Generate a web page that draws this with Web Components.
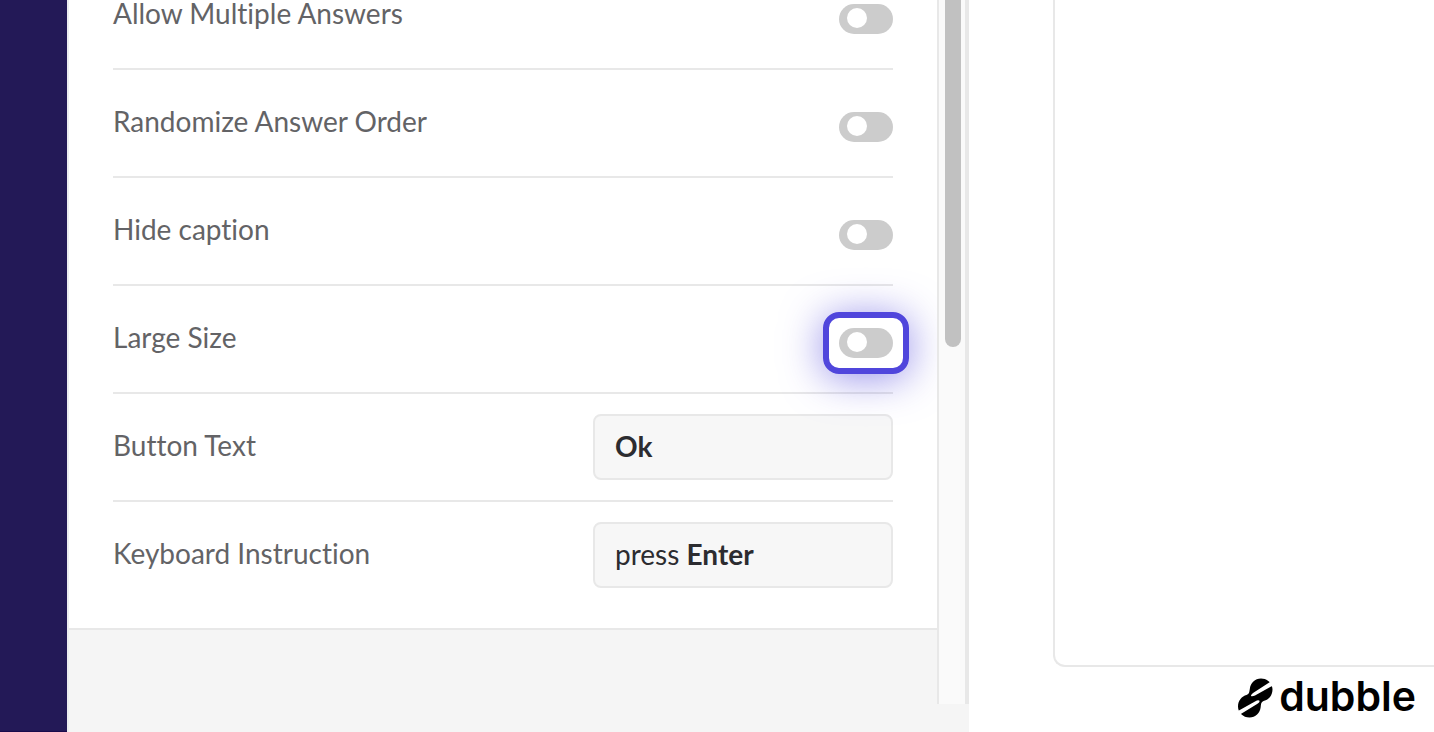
<!DOCTYPE html>
<html lang="en">
<head>
<meta charset="utf-8">
<meta name="viewport" content="width=device-width, initial-scale=1">
<title>Question settings</title>
<style>
  :root {
    --line: #e8e8e8;
    --surface: #f5f5f5;
    --field: #f7f7f7;
    --label: #636366;
    --ink: #2c2c30;
    --accent: #5046dc;
  }

  body {
    margin: 0;
    background: #fff;
    color: var(--label);
    font-family: Lato, "Liberation Sans", sans-serif;
    font-size: 28px;
    font-variant-ligatures: none;
    line-height: 28px;
  }
</style>
</head>
<body>
<builder-app>
  <settings-panel slot="panel">
    <toggle-row label="Allow Multiple Answers"></toggle-row>
    <toggle-row label="Randomize Answer Order"></toggle-row>
    <toggle-row label="Hide caption"></toggle-row>
    <toggle-row label="Large Size" highlighted></toggle-row>
    <text-row label="Button Text" value="Ok"></text-row>
    <rich-text-row label="Keyboard Instruction">press <b>Enter</b></rich-text-row>
  </settings-panel>
  <preview-pane slot="preview">
    <brand-logo>dubble</brand-logo>
  </preview-pane>
</builder-app>

<script>
// Shared helper: attach an open root and fill it with markup
const renderShadow = (host, markup) => {
  host.attachShadow({ mode: 'open' }).innerHTML = markup;
};

class BuilderApp extends HTMLElement {
  constructor() {
    super();
    renderShadow(this, `
      <style>
        :host {
          display: grid;
          grid-template-columns: 67px minmax(0, 902fr) minmax(0, 465fr);
          height: 100vh;
          overflow: hidden;
        }
        nav {
          background: #231957;
          border-bottom: 1px solid #190b4c;
        }
      </style>
      <nav aria-label="Main"></nav>
      <slot name="panel"></slot>
      <slot name="preview"></slot>
    `);
  }
}

class SettingsPanel extends HTMLElement {
  constructor() {
    super();
    renderShadow(this, `
      <style>
        :host {
          display: flex;
          flex-direction: column;
          min-height: 0;
          background: var(--surface);
          border-left: 2px solid #ececf0;
          padding-bottom: 28px;
        }
        .scroller {
          display: flex;
          flex: 1;
          min-height: 0;
        }
        /* content is scrolled to its end, so the list is anchored to the bottom */
        .content {
          display: flex;
          flex: 1;
          flex-direction: column;
          justify-content: flex-end;
          min-width: 0;
          overflow: hidden;
          padding-bottom: 74px;
        }
        .card {
          background: #fff;
          border-bottom: 2px solid var(--line);
          padding: 0 44px 20px;
        }
        .track {
          display: flex;
          flex-direction: column;
          width: 16px;
          padding: 0 4px 0 6px;
          background: #fafafa;
          border-left: 2px solid var(--line);
          border-right: 4px solid #e8e8e8;
        }
        .thumb {
          flex: 35;
          background: #c1c1c1;
          border-radius: 0 0 8px 8px;
        }
        .rest {
          flex: 36;
        }
      </style>
      <div class="scroller">
        <div class="content"><div class="card"><slot></slot></div></div>
        <div class="track"><div class="thumb"></div><div class="rest"></div></div>
      </div>
    `);
  }
}

// Base row: label on the left, control from the subclass on the right
class SettingRow extends HTMLElement {
  constructor() {
    super();
    const label = this.getAttribute('label') || '';
    renderShadow(this, `
      <style>
        :host {
          display: flex;
          align-items: center;
          justify-content: space-between;
          gap: 24px;
          height: 106px;
          border-bottom: 2px solid var(--line);
        }
        :host(:last-child) {
          border-bottom: 0;
        }
        label, .label {
          padding-bottom: 4px;
        }
        .field {
          box-sizing: border-box;
          width: 300px;
          height: 66px;
          margin: 0;
          padding: 16px 20px 18px;
          background: var(--field);
          border: 2px solid var(--line);
          border-radius: 8px;
          color: var(--ink);
          font: inherit;
          font-variant-ligatures: inherit;
          outline: 0;
        }
        input.field {
          font-weight: 700;
        }
        .toggle {
          position: relative;
          flex: none;
          margin-top: 8px;
          width: 54px;
          height: 30px;
        }
        .toggle input {
          appearance: none;
          display: block;
          box-sizing: border-box;
          width: 54px;
          height: 30px;
          margin: 0;
          padding: 4px 8px;
          background: #ccc;
          border-radius: 15px;
        }
        .toggle input::before {
          content: "";
          display: block;
          width: 20px;
          height: 20px;
          background: #fff;
          border-radius: 50%;
        }
        .toggle input:checked {
          background: var(--accent);
        }
        .toggle input:checked::before {
          margin-left: auto;
        }
        :host([highlighted]) .toggle::after {
          content: "";
          position: absolute;
          inset: -16px;
          border: 6px solid var(--accent);
          border-radius: 16px;
          box-shadow: 0 4px 40px rgba(80, 70, 220, 0.6);
          pointer-events: none;
        }
      </style>
      ${this.template(label)}
    `);
  }
}

class ToggleRow extends SettingRow {
  template(label) {
    return `
      <label for="control">${label}</label>
      <span class="toggle"><input id="control" type="checkbox" role="switch"></span>
    `;
  }
}

class TextRow extends SettingRow {
  template(label) {
    return `
      <label for="control">${label}</label>
      <input id="control" class="field" type="text" value="${this.getAttribute('value') || ''}">
    `;
  }
}

// Editable box that keeps inline formatting such as <b>
class RichTextRow extends SettingRow {
  template(label) {
    return `
      <span class="label" id="label">${label}</span>
      <div class="field" contenteditable="true" role="textbox" aria-labelledby="label"><slot></slot></div>
    `;
  }
}

class PreviewPane extends HTMLElement {
  constructor() {
    super();
    renderShadow(this, `
      <style>
        :host {
          display: flex;
          flex-direction: column;
          min-height: 0;
          padding-left: 84px;
          background: #fff;
        }
        .frame {
          flex: 1;
          border: solid var(--line);
          border-width: 0 0 2px 2px;
          border-radius: 0 0 0 12px;
        }
        footer {
          box-sizing: border-box;
          display: flex;
          align-items: center;
          justify-content: flex-end;
          height: 65px;
          padding: 0 18px 4px 0;
        }
      </style>
      <div class="frame"></div>
      <footer><slot></slot></footer>
    `);
  }
}

class BrandLogo extends HTMLElement {
  constructor() {
    super();
    renderShadow(this, `
      <style>
        :host {
          display: flex;
          align-items: center;
          gap: 6px;
          color: #000;
          font-family: Inter, "Liberation Sans", sans-serif;
          font-size: 41px;
          font-weight: 600;
          line-height: 40px;
        }
        svg {
          flex: none;
        }
        .name {
          padding-bottom: 4px;
        }
      </style>
      <svg width="36" height="40" viewBox="0 0 36 40" aria-hidden="true">
        <path d="M24 .5C30.500 .5 35.500 5.500 35.500 11.500C35.500 17.500 31.500 22 26.500 23C24 24 24 26 23.700 29C23 35 18.500 39.500 12.500 39.500C6 39.500 1 34.500 1 28.500C1 22.500 5 18 9.500 17C12.300 16 12.300 14 12.800 11C13.500 5 18 .5 24 .5Z"/>
        <path d="M33 4L16 15Q13 17.500 14.500 18.300Q16 18.500 18 17.500L36 7.500Z M1 33L18 23.500Q21.500 21.600 22.500 22.800Q23 24 20.500 25.700L3 36.500Z" fill="#fff"/>
      </svg>
      <span class="name"><slot></slot></span>
    `);
  }
}

customElements.define('builder-app', BuilderApp);
customElements.define('settings-panel', SettingsPanel);
customElements.define('toggle-row', ToggleRow);
customElements.define('text-row', TextRow);
customElements.define('rich-text-row', RichTextRow);
customElements.define('preview-pane', PreviewPane);
customElements.define('brand-logo', BrandLogo);
</script>
</body>
</html>
